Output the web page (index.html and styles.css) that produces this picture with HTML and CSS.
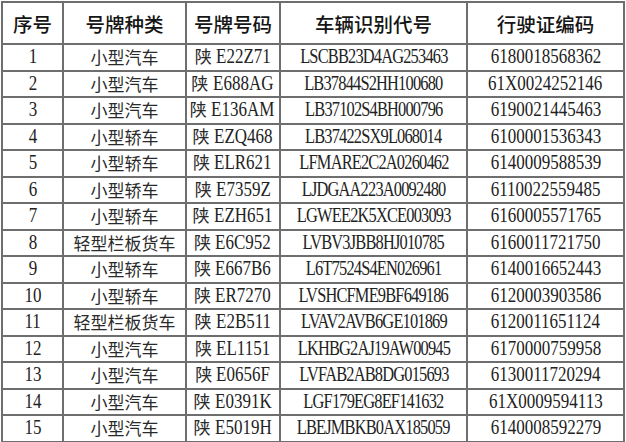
FILE: index.html
```html
<!DOCTYPE html>
<html lang="zh-CN">
<head>
<meta charset="utf-8">
<title>车辆信息表</title>
<link rel="stylesheet" href="styles.css">
</head>
<body>
<table class="grid">
  <colgroup>
    <col class="c1"><col class="c2"><col class="c3"><col class="c4"><col class="c5">
  </colgroup>
  <thead>
    <tr><th>序号</th><th>号牌种类</th><th>号牌号码</th><th>车辆识别代号</th><th>行驶证编码</th></tr>
  </thead>
  <tbody>
    <tr><td><span class="lat">1</span></td><td class="cn">小型汽车</td><td><span class="cn">陕</span> <span class="lat pl">E22Z71</span></td><td><span class="lat vin">LSCBB23D4AG253463</span></td><td><span class="lat">6180018568362</span></td></tr>
    <tr><td><span class="lat">2</span></td><td class="cn">小型汽车</td><td><span class="cn">陕</span> <span class="lat pl">E688AG</span></td><td><span class="lat vin">LB37844S2HH100680</span></td><td><span class="lat">61X0024252146</span></td></tr>
    <tr><td><span class="lat">3</span></td><td class="cn">小型汽车</td><td><span class="cn">陕</span> <span class="lat pl">E136AM</span></td><td><span class="lat vin">LB37102S4BH000796</span></td><td><span class="lat">6190021445463</span></td></tr>
    <tr><td><span class="lat">4</span></td><td class="cn">小型轿车</td><td><span class="cn">陕</span> <span class="lat pl">EZQ468</span></td><td><span class="lat vin">LB37422SX9L068014</span></td><td><span class="lat">6100001536343</span></td></tr>
    <tr><td><span class="lat">5</span></td><td class="cn">小型轿车</td><td><span class="cn">陕</span> <span class="lat pl">ELR621</span></td><td><span class="lat vin">LFMARE2C2A0260462</span></td><td><span class="lat">6140009588539</span></td></tr>
    <tr><td><span class="lat">6</span></td><td class="cn">小型轿车</td><td><span class="cn">陕</span> <span class="lat pl">E7359Z</span></td><td><span class="lat vin">LJDGAA223A0092480</span></td><td><span class="lat">6110022559485</span></td></tr>
    <tr><td><span class="lat">7</span></td><td class="cn">小型轿车</td><td><span class="cn">陕</span> <span class="lat pl">EZH651</span></td><td><span class="lat vin">LGWEE2K5XCE003093</span></td><td><span class="lat">6160005571765</span></td></tr>
    <tr><td><span class="lat">8</span></td><td class="cn">轻型栏板货车</td><td><span class="cn">陕</span> <span class="lat pl">E6C952</span></td><td><span class="lat vin">LVBV3JBB8HJ010785</span></td><td><span class="lat">6160011721750</span></td></tr>
    <tr><td><span class="lat">9</span></td><td class="cn">小型轿车</td><td><span class="cn">陕</span> <span class="lat pl">E667B6</span></td><td><span class="lat vin">L6T7524S4EN026961</span></td><td><span class="lat">6140016652443</span></td></tr>
    <tr><td><span class="lat">10</span></td><td class="cn">小型轿车</td><td><span class="cn">陕</span> <span class="lat pl">ER7270</span></td><td><span class="lat vin">LVSHCFME9BF649186</span></td><td><span class="lat">6120003903586</span></td></tr>
    <tr><td><span class="lat">11</span></td><td class="cn">轻型栏板货车</td><td><span class="cn">陕</span> <span class="lat pl">E2B511</span></td><td><span class="lat vin">LVAV2AVB6GE101869</span></td><td><span class="lat">6120011651124</span></td></tr>
    <tr><td><span class="lat">12</span></td><td class="cn">小型汽车</td><td><span class="cn">陕</span> <span class="lat pl">EL1151</span></td><td><span class="lat vin">LKHBG2AJ19AW00945</span></td><td><span class="lat">6170000759958</span></td></tr>
    <tr><td><span class="lat">13</span></td><td class="cn">小型汽车</td><td><span class="cn">陕</span> <span class="lat pl">E0656F</span></td><td><span class="lat vin">LVFAB2AB8DG015693</span></td><td><span class="lat">6130011720294</span></td></tr>
    <tr><td><span class="lat">14</span></td><td class="cn">小型汽车</td><td><span class="cn">陕</span> <span class="lat pl">E0391K</span></td><td><span class="lat vin">LGF179EG8EF141632</span></td><td><span class="lat">61X0009594113</span></td></tr>
    <tr><td><span class="lat">15</span></td><td class="cn">小型汽车</td><td><span class="cn">陕</span> <span class="lat pl">E5019H</span></td><td><span class="lat vin">LBEJMBKB0AX185059</span></td><td><span class="lat">6140008592279</span></td></tr>
  </tbody>
</table>
</body>
</html>
```

FILE: styles.css
```css
html, body {
  margin: 0;
  padding: 0;
  background: #ffffff;
}

body {
  padding: 1px 0 0 1px;
}

.grid {
  border-collapse: collapse;
  table-layout: fixed;
  width: 622px;
  color: #222222;
  font-family: "Liberation Serif", "Noto Sans CJK SC", serif;
}

.c1 { width: 61px; }
.c2 { width: 123px; }
.c3 { width: 94px; }
.c4 { width: 187px; }
.c5 { width: 157px; }

.grid th,
.grid td {
  border: 2px solid #6e6e6e;
  text-align: center;
  vertical-align: middle;
  padding: 0;
  white-space: nowrap;
  overflow: hidden;
}

.grid th {
  height: 40px;
  font-family: "Noto Sans CJK SC", sans-serif;
  font-weight: 500;
  font-size: 19.5px;
  color: #151515;
}

.grid td {
  height: 24.5px;
  font-size: 17px;
  line-height: 20px;
}

.grid .cn {
  font-family: "Noto Sans CJK SC", sans-serif;
  font-weight: 400;
  font-size: 17px;
  color: #2a2a2a;
}

.lat {
  display: inline-block;
  font-family: "Liberation Serif", serif;
  font-size: 20px;
  line-height: 20px;
  transform: scaleX(0.85);
  margin: 0 -12px;
  color: #222222;
}

.lat.pl {
  transform-origin: left center;
  margin: 0 -9px 0 0;
}

.lat.vin {
  letter-spacing: -1px;
  transform: scaleX(0.82);
  margin: 0 -20px;
}
```
